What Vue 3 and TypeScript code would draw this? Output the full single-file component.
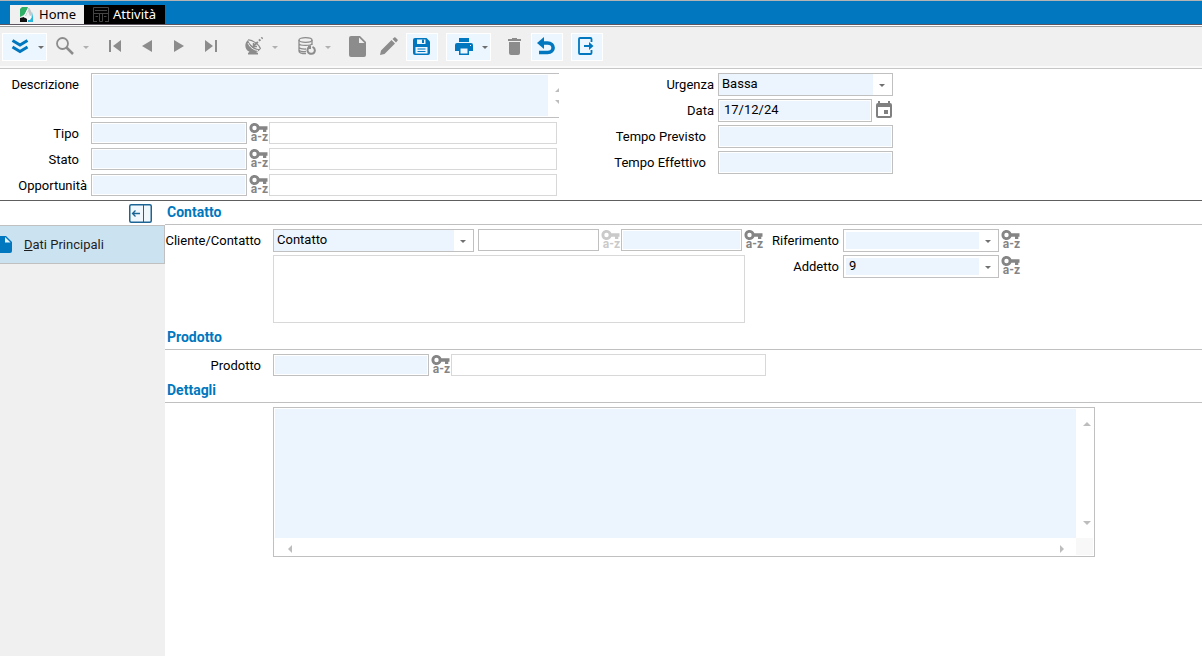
<script setup lang="ts">
import { reactive } from 'vue'

interface LookupRow {
  id: string
  label: string
  wide?: boolean
}

const lookups: LookupRow[] = [
  { id: 'tipo', label: 'Tipo' },
  { id: 'stato', label: 'Stato' },
  { id: 'opportunita', label: 'Opportunità', wide: true },
]

const form = reactive<Record<string, string>>({
  descrizione: '',
  tipo: '',
  stato: '',
  opportunita: '',
  urgenza: 'Bassa',
  data: '17/12/24',
  previsto: '',
  effettivo: '',
  contatto: 'Contatto',
  codice: '',
  cliente: '',
  riferimento: '',
  addetto: '9',
  prodotto: '',
  dettagli: '',
})
</script>

<template>
  <div class="page">
    <svg class="defs" aria-hidden="true">
      <symbol id="key" viewBox="0 0 19 10">
        <path fill="currentColor" fill-rule="evenodd" d="M5.500 0C8 0 9.700 1.300 10.400 3.200H18.500V6.800H17.300V9H14V6.800H10.400C9.700 8.700 8 10 5.500 10C2.500 10 .5 7.800 .5 5S2.500 0 5.500 0ZM5.500 2.800A2.200 2.200 0 1 0 5.500 7.200A2.200 2.200 0 1 0 5.500 2.800Z" />
      </symbol>
      <symbol id="caret" viewBox="0 0 6 3"><path fill="currentColor" d="M0 0H6L3 3Z" /></symbol>
    </svg>

    <nav class="tabs">
      <a href="#home" class="tab tab-home">
        <svg width="14" height="16" viewBox="0 0 14 16" aria-hidden="true">
          <path fill="#2fae66" d="M2 0H8L6 5L4 8L0 10V2Z" />
          <path fill="#111" d="M0 11L4 10L7 12V15H0Z" />
          <path fill="#c3c8cb" d="M8 1H9.500L12 6V10L10 9L8 4L6 9H4Z" />
          <path fill="#28b5dc" d="M13 5V15H8V12L10 13L12 10Z" />
          <path stroke="#fff" stroke-width="1" fill="none" d="M8 2L4 10H6.500L9 13L11 8.500" />
        </svg>
        <span>Home</span>
      </a>
      <a href="#attivita" class="tab tab-active">
        <svg width="16" height="16" viewBox="0 0 16 16" fill="none" stroke="#454545" aria-hidden="true">
          <path d="M.5 15V.5H15.500V15M2 3.500H14M1 6.500H15M6.500 7V14.500H9.500V7M0 14.500H4M12 14.500H16M2.500 9.500H5M11 9.500H13.500" />
        </svg>
        <span>Attività</span>
      </a>
    </nav>

    <div class="toolbar" role="toolbar" aria-label="Comandi">
      <div class="group">
        <button class="split on" aria-label="Espandi">
          <svg width="18" height="16" viewBox="0 0 18 16" fill="none" stroke="currentColor" stroke-width="3"><path d="M1.500 2.500L9 7L16.500 2.500M1.500 9L9 13.500L16.500 9" /></svg>
          <svg class="caret" width="6" height="3"><use href="#caret" /></svg>
        </button>
        <button class="split" aria-label="Cerca">
          <svg width="18" height="18" viewBox="0 0 18 18" fill="none" stroke="currentColor"><circle cx="6.500" cy="6.500" r="5.500" stroke-width="1.800" /><path stroke-width="2.500" d="M10.500 10.500L17 17" /></svg>
          <svg class="caret" width="6" height="3"><use href="#caret" /></svg>
        </button>
      </div>
      <div class="group">
        <button aria-label="Primo"><svg width="12" height="12" viewBox="0 0 12 12" fill="currentColor"><path d="M0 0H2V12H0ZM12 0V12L4 6Z" /></svg></button>
        <button aria-label="Precedente"><svg width="10" height="12" viewBox="0 0 10 12" fill="currentColor"><path d="M10 0V12L0 6Z" /></svg></button>
        <button aria-label="Successivo"><svg width="10" height="12" viewBox="0 0 10 12" fill="currentColor"><path d="M0 0V12L10 6Z" /></svg></button>
        <button aria-label="Ultimo"><svg width="12" height="12" viewBox="0 0 12 12" fill="currentColor"><path d="M10 0H12V12H10ZM0 0V12L8 6Z" /></svg></button>
      </div>
      <button class="split" aria-label="Trasmetti">
        <svg width="18" height="18" viewBox="0 0 18 18"><path fill="currentColor" d="M3 3C-1 6 -.5 13 4.500 14.800L3 16V17.500H13V16L11 15C13 14.500 14.500 13.500 15.500 12C11 12.500 4.500 8 3 3Z" /><path d="M3 3C7 2.500 14.500 7.500 15.500 12" stroke="currentColor" fill="none" stroke-width="1.200" /><path d="M3 6C5 10.500 8.500 13 13 13.500" stroke="#f0f0f0" fill="none" /><path d="M8.500 9L17.500 .5" stroke="currentColor" stroke-width="2" stroke-dasharray="6 1.500 2 1.500" /><path d="M8.500 6V9.500H12" stroke="currentColor" fill="none" stroke-width="1.500" /></svg>
        <svg class="caret" width="6" height="3"><use href="#caret" /></svg>
      </button>
      <button class="split" aria-label="Archivio">
        <svg width="18" height="18" viewBox="0 0 18 18" fill="none" stroke="currentColor" stroke-width="1.300"><ellipse cx="7.500" cy="3" rx="6.500" ry="2.300" /><path d="M1 3V14C1 15.500 4 16.700 8 16.700M14 3V8M1 6.500C1 9 14 9 14 6.500M1 10C1 11.500 4 12.200 8 12M1 13.200C2 14.500 5 15 8 14.500" /><path stroke-width="2" d="M11 10C8 13 10 17 13.500 16.800C17.500 16.500 18 11.500 14.500 9.800M10 9.500H12V12" /></svg>
        <svg class="caret" width="6" height="3"><use href="#caret" /></svg>
      </button>
      <div class="group">
        <button aria-label="Nuovo"><svg width="17" height="21" viewBox="0 0 17 21"><path fill="currentColor" d="M2 0H11L17 6V19Q17 21 15 21H2Q0 21 0 19V2Q0 0 2 0Z" /><path fill="#f0f0f0" d="M10 1.500V7H15.500Z" /></svg></button>
        <button aria-label="Modifica"><svg width="18" height="18" viewBox="0 0 18 18" fill="currentColor"><path d="M0 18L1 13.500L11.500 3L15 6.500L4.500 17ZM12.500 2L14.500 .2Q15 0 15.500 .5L17.500 2.500Q18 3 17.700 3.500L16 5.500Z" /></svg></button>
        <button class="on" aria-label="Salva"><svg width="17" height="17" viewBox="0 0 17 17"><path fill="currentColor" d="M2 0H13.500L17 3.500V15Q17 17 15 17H2Q0 17 0 15V2Q0 0 2 0Z" /><path fill="#ebf6fe" d="M4 1.500H12.500V6H4ZM2.500 9H14.500V15.500H2.500Z" /><path fill="currentColor" d="M9 1.500H11V5H9ZM4.500 10.500H12.500V11.500H4.500ZM4.500 13H12.500V14H4.500Z" /></svg></button>
      </div>
      <button class="split on" aria-label="Stampa">
        <svg width="18" height="17" viewBox="0 0 18 17"><path fill="currentColor" d="M4 0H14V4H4ZM2 5H16Q18 5 18 7V13H14V17H4V13H0V7Q0 5 2 5Z" /><path fill="#ebf6fe" d="M5.500 10.500H12.500V15.500H5.500ZM15 7H16V8H15Z" /></svg>
        <svg class="caret" width="6" height="3"><use href="#caret" /></svg>
      </button>
      <div class="group">
        <button aria-label="Elimina"><svg width="13" height="17" viewBox="0 0 13 17" fill="currentColor"><path d="M0 1H4V0H9V1H13V3H0ZM1 4H12V15Q12 17 10 17H3Q1 17 1 15Z" /></svg></button>
        <button class="on" aria-label="Annulla"><svg width="18" height="18" viewBox="0 0 18 18" fill="none" stroke="currentColor" stroke-width="3.600"><path d="M4 6H10.500C18 6 18 15.500 10.500 15.500H2" /><path fill="currentColor" stroke="none" d="M7 0V12L0 6Z" /></svg></button>
      </div>
      <button class="on" aria-label="Esci"><svg width="16" height="18" viewBox="0 0 16 18" fill="none" stroke="currentColor"><path stroke-width="1.800" d="M13.500 5V2Q13.500 1 12.500 1H2Q1 1 1 2V16Q1 17 2 17H12.500Q13.500 17 13.500 16V13" /><path stroke-width="2" d="M6 9H13" /><path fill="currentColor" stroke="none" d="M11 5L15.500 9L11 13Z" /></svg></button>
    </div>

    <form class="header-form" @submit.prevent>
      <div class="left">
        <div class="row">
          <label class="lbl" for="descrizione">Descrizione</label>
          <div class="memo memo-cut">
            <textarea id="descrizione" v-model="form.descrizione"></textarea>
            <span class="arrows-v"><svg width="8" height="4"><path d="M0 4H8L4 0Z" /></svg><svg width="8" height="4"><path d="M0 0H8L4 4Z" /></svg></span>
          </div>
        </div>
        <div v-for="r in lookups" :key="r.id" class="row">
          <label class="lbl" :class="{ near: r.wide }" :for="r.id">{{ r.label }}</label>
          <input :id="r.id" v-model="form[r.id]" class="field code" type="text">
          <button class="lookup" :aria-label="'Cerca ' + r.label"><svg width="19" height="10"><use href="#key" /></svg><span>a-z</span></button>
          <input class="field plain desc" type="text" readonly :aria-label="r.label + ' descrizione'">
        </div>
      </div>
      <div class="right">
        <div class="row">
          <label class="lbl near" for="urgenza">Urgenza</label>
          <span class="combo full"><select id="urgenza" v-model="form.urgenza"><option>Bassa</option><option>Alta</option></select><svg class="caret" width="6" height="3"><use href="#caret" /></svg></span>
        </div>
        <div class="row">
          <label class="lbl near" for="data">Data</label>
          <input id="data" v-model="form.data" class="field date" type="text">
          <button class="calendar" aria-label="Calendario"><svg width="16" height="17" viewBox="0 0 16 17"><path fill="currentColor" fill-rule="evenodd" d="M2 2V0H4V2H12V0H14V2Q16 2 16 4V15Q16 17 14 17H2Q0 17 0 15V4Q0 2 2 2ZM2 6V15H14V6ZM8 9H12V13H8Z" /></svg></button>
        </div>
        <div class="row">
          <label class="lbl" for="previsto">Tempo Previsto</label>
          <input id="previsto" v-model="form.previsto" class="field full" type="text">
        </div>
        <div class="row">
          <label class="lbl" for="effettivo">Tempo Effettivo</label>
          <input id="effettivo" v-model="form.effettivo" class="field full" type="text">
        </div>
      </div>
    </form>

    <div class="body">
      <aside class="sidebar">
        <div class="strip">
          <button class="collapse" aria-label="Riduci pannello"><svg width="23" height="19" viewBox="0 0 23 19" fill="none" stroke="#1c6493"><rect x=".75" y=".75" width="21.500" height="17.500" rx="1.500" stroke-width="1.500" /><path d="M14.500 1V18" /><path d="M3.500 9.500H11M6.500 6.500L3.500 9.500L6.500 12.500" stroke-width="1.300" /></svg></button>
        </div>
        <a href="#dati" class="item">
          <svg width="12" height="17" viewBox="0 0 12 17"><path fill="#0077be" d="M0 0H6L12 6V15Q12 17 10 17H0Z" /><path fill="#e4f2fa" d="M5 1V6.500H10.500Z" /></svg>
          <span><u>D</u>ati Principali</span>
        </a>
      </aside>

      <main class="content">
        <h2>Contatto</h2>
        <section class="contact">
          <div class="contact-left">
            <div class="row">
              <label class="lbl" for="contatto">Cliente/Contatto</label>
              <span class="combo type"><select id="contatto" v-model="form.contatto"><option>Contatto</option><option>Cliente</option></select><svg class="caret" width="6" height="3"><use href="#caret" /></svg></span>
              <input v-model="form.codice" class="field white short" type="text" aria-label="Codice contatto">
              <button class="lookup" disabled aria-label="Cerca codice"><svg width="19" height="10"><use href="#key" /></svg><span>a-z</span></button>
              <input v-model="form.cliente" class="field short" type="text" aria-label="Contatto">
              <button class="lookup" aria-label="Cerca contatto"><svg width="19" height="10"><use href="#key" /></svg><span>a-z</span></button>
            </div>
            <textarea class="summary" readonly aria-label="Riepilogo contatto"></textarea>
          </div>
          <div class="contact-right">
            <div class="row">
              <label class="lbl near" for="riferimento">Riferimento</label>
              <span class="combo inset"><select id="riferimento" v-model="form.riferimento"><option></option></select><svg class="caret" width="6" height="3"><use href="#caret" /></svg></span>
              <button class="lookup" aria-label="Cerca riferimento"><svg width="19" height="10"><use href="#key" /></svg><span>a-z</span></button>
            </div>
            <div class="row">
              <label class="lbl near" for="addetto">Addetto</label>
              <span class="combo inset"><select id="addetto" v-model="form.addetto"><option>9</option></select><svg class="caret" width="6" height="3"><use href="#caret" /></svg></span>
              <button class="lookup" aria-label="Cerca addetto"><svg width="19" height="10"><use href="#key" /></svg><span>a-z</span></button>
            </div>
          </div>
        </section>

        <h2>Prodotto</h2>
        <section class="row product">
          <label class="lbl" for="prodotto">Prodotto</label>
          <input id="prodotto" v-model="form.prodotto" class="field code" type="text">
          <button class="lookup" aria-label="Cerca prodotto"><svg width="19" height="10"><use href="#key" /></svg><span>a-z</span></button>
          <input class="field plain name" type="text" readonly aria-label="Descrizione prodotto">
        </section>

        <h2>Dettagli</h2>
        <div class="memo details">
          <textarea v-model="form.dettagli" aria-label="Dettagli"></textarea>
          <span class="arrows-v"><svg width="8" height="4"><path d="M0 4H8L4 0Z" /></svg><svg width="8" height="4"><path d="M0 0H8L4 4Z" /></svg></span>
          <span class="arrows-h"><svg width="4" height="8"><path d="M4 0V8L0 4Z" /></svg><svg width="4" height="8"><path d="M0 0V8L4 4Z" /></svg></span>
          <span class="corner"></span>
        </div>
      </main>
    </div>
  </div>
</template>

<style>
body { margin: 0; background: #fff; }
</style>

<style scoped>
* { box-sizing: border-box; }
.page {
  display: flex;
  flex-direction: column;
  min-height: 100vh;
  font: 13px/16px Roboto, "Liberation Sans", sans-serif;
  color: #000;
}
.defs { display: none; }
svg { display: block; flex: none; }
button { border: 0; padding: 0; margin: 0; background: none; color: #8c8c8c; font: inherit; }
input, select, textarea { font: inherit; color: inherit; margin: 0; border-radius: 0; outline: 0; }
textarea { resize: none; overflow: hidden; display: block; }

.tabs {
  display: flex;
  height: 25px;
  padding: 4px 0 0 10px;
  background: #0077be;
  border-top: 1px solid #b4b4b4;
  border-bottom: 1px solid #5d5560;
}
.tab {
  display: flex;
  align-items: center;
  text-decoration: none;
  font: 13px/19px "Noto Sans", "Open Sans", sans-serif;
}
.tab-home { width: 74px; padding-left: 10px; gap: 5px; background: #f0f0f0; color: #000; }
.tab-active { width: 81px; padding-left: 9px; gap: 4px; background: #000; color: #fff; }

.toolbar {
  display: flex;
  gap: 8px;
  height: 43px;
  padding: 6px 2px 0;
  margin-top: 1px;
  background: #f0f0f0;
  border-top: 1px solid #a0a0a0;
  border-bottom: 1px solid #c6c6c6;
  box-shadow: inset 0 -2px 0 #fafafa;
}
.group { display: flex; }
.toolbar button {
  display: flex;
  align-items: center;
  justify-content: center;
  width: 32px;
  height: 28px;
  padding: 0 2px 2px 0;
}
.toolbar button.split { position: relative; width: 45px; padding-right: 10px; }
.toolbar button.on { background: #ebf6fe; border: 1px solid #fff; color: #0077be; }
.split .caret { position: absolute; right: 3px; top: 13px; color: #b0b0b0; }
.toolbar .split.on .caret { right: 2px; top: 12px; color: #6e6e6e; }

.header-form { display: flex; padding: 4px 0; border-bottom: 1px solid #5e5e5e; }
.left { display: flex; flex-direction: column; gap: 4px; width: 559px; }
.right { display: flex; flex-direction: column; gap: 3px; }
.row { display: flex; }
.lbl { flex: none; padding: 4px 12px 0 0; text-align: right; white-space: nowrap; }
.lbl.near { padding-right: 4px; }
.left .lbl { width: 91px; }
.right .lbl { width: 159px; }
.field {
  height: 22px;
  padding: 0 5px;
  background: #ecf4fd;
  border: 1px solid #c0c0c0;
  box-shadow: inset 0 0 0 1px #fff;
}
.right .field { height: 23px; }
.field.plain { background: #fff; border-color: #d8d8d8; }
.field.white { background: #fff; margin-left: 4px; }
.right .date { width: 154px; padding-bottom: 2px; }
.code { width: 156px; }
.desc { width: 288px; }
.name { width: 315px; }
.short { width: 121px; }
.full { width: 175px; }
.lookup {
  display: flex;
  flex-direction: column;
  align-items: flex-end;
  width: 22px;
  height: 22px;
  padding: 1px 1px 0 0;
  color: #858585;
}
.lookup span { font-size: 12px; font-weight: 700; line-height: 8px; }
.lookup:disabled { color: #cacaca; }
.calendar { display: flex; align-items: flex-start; padding: 2px 0 0 4px; color: #808080; }

.combo { position: relative; display: flex; height: 23px; border: 1px solid #c0c0c0; background: #fff; }
.combo select {
  flex: 1;
  appearance: none;
  border: 0;
  padding: 0 20px 2px 3px;
  background: linear-gradient(#ecf4fd, #ecf4fd) no-repeat 0 0 / calc(100% - 19px) 100%;
}
.combo .caret { position: absolute; right: 7px; top: 10px; color: #707070; }
.combo.inset { width: 156px; padding: 2px; }
.combo.inset select { background-size: calc(100% - 17px) 100%; }
.combo.type { width: 201px; }

.memo { display: grid; grid-template-columns: 1fr 18px; border: 1px solid #c0c0c0; padding: 1px 0 0 1px; }
.memo textarea { width: 100%; height: 100%; border: 0; background: #ecf4fd; }
.memo svg { fill: #bdbdbd; }
.arrows-v { display: flex; flex-direction: column; justify-content: space-between; padding: 13px 0 13px 7px; }
.arrows-h { display: flex; justify-content: space-between; align-items: center; padding: 3px 12px 0 13px; }
.memo-cut { width: 468px; height: 45px; padding-bottom: 1px; border-right: 0; grid-template-columns: 1fr 11px; overflow: hidden; }
.memo-cut .arrows-v { padding: 13px 0 12px 7px; }
.corner { width: 17px; height: 17px; background: #f8f8f8; }

.body { display: flex; flex: 1; }
.sidebar { width: 165px; flex: none; background: #f0f0f0; }
.strip { display: flex; justify-content: flex-end; height: 24px; padding: 3px 13px 0 0; background: #fff; }
.collapse { height: 19px; background: #f0f8fd; border-radius: 2px; }
.item {
  display: flex;
  align-items: center;
  gap: 12px;
  height: 39px;
  background: #cbe3f1;
  border: 1px solid #c0c0c0;
  border-left: 0;
  color: #1e1e1e;
  text-decoration: none;
}
.content { flex: 1; min-width: 0; }
h2 {
  height: 24px;
  margin: 0;
  padding: 3px 2px 0;
  border-bottom: 1px solid #c0c0c0;
  font-size: 14px;
  line-height: 16px;
  font-weight: 700;
  color: #0077be;
}
.content .lbl { width: 108px; }
.contact { display: flex; padding: 4px 0 3px; }
.contact-left { width: 600px; display: flex; flex-direction: column; gap: 3px; }
.contact-right { display: flex; flex-direction: column; gap: 3px; }
.content .contact-right .lbl { width: 78px; }
.summary { width: 472px; height: 68px; margin-left: 108px; border: 1px solid #d8d8d8; }
.product { padding: 4px 0 3px; }
.details { max-width: 822px; height: 150px; margin: 4px 20px 0 108px; grid-template-rows: 1fr 18px; }
</style>
